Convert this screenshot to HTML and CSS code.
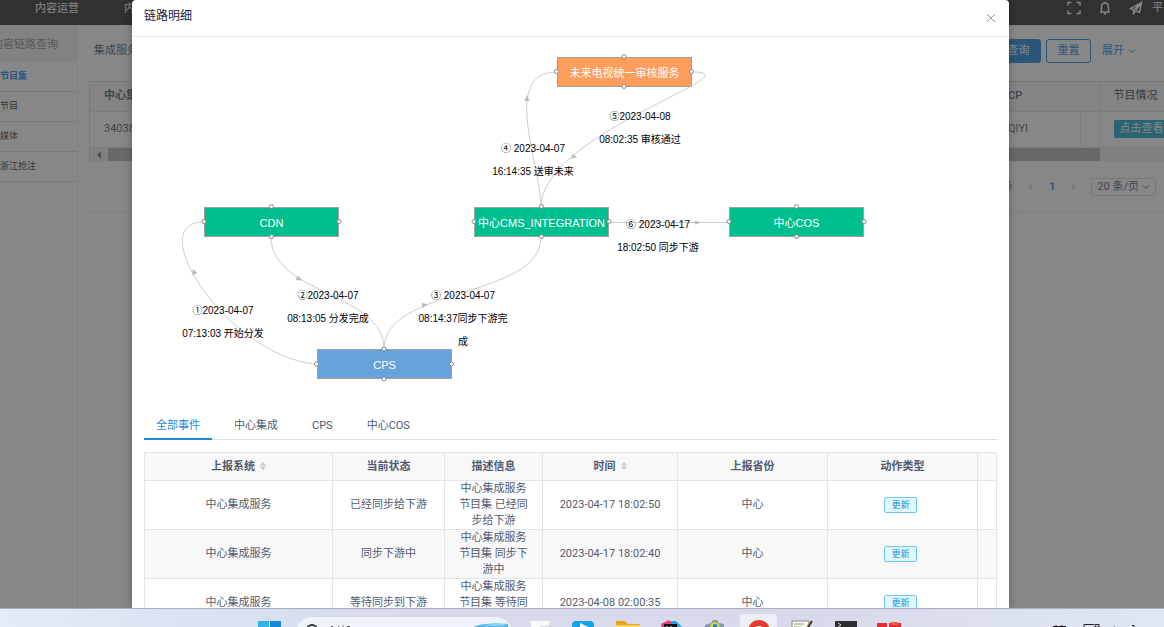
FILE: index.html
```html
<!DOCTYPE html>
<html lang="zh-CN">
<head>
<meta charset="utf-8">
<title>链路明细</title>
<link rel="stylesheet" href="styles.css">
</head>
<body>
<div class="screen">
  <div class="page">
    <header class="topbar">
      <nav class="topnav"><span>内容运营</span><span>内</span></nav>
      <div class="topicons">
        <svg width="14" height="14" viewBox="0 0 14 14"><path d="M1 4.500V1.500H4.500M9.500 1.500H13V4.500M13 9.500V12.500H9.500M4.500 12.500H1V9.500"/></svg>
        <svg width="12" height="14" viewBox="0 0 12 14"><path d="M1 11H11M2.500 11V6C2.500 3.500 4 2 6 2S9.500 3.500 9.500 6V11M6 2V.8M4.800 12.800H7.200"/></svg>
        <svg width="14" height="14" viewBox="0 0 14 14"><path d="M12.500 1.500L1.500 7.500L4.500 9L12.500 1.500L10.500 11.500L6.500 9.800M4.500 9V12.500L6.500 9.800L12.500 1.500"/></svg>
        <span>平</span>
      </div>
    </header>
    <div class="columns">
      <aside class="side">
        <div class="side-title">内容链路查询</div>
        <a class="side-item active" href="#">节目集</a>
        <a class="side-item" href="#">节目</a>
        <a class="side-item" href="#">媒体</a>
        <a class="side-item" href="#">浙江抢注</a>
      </aside>
      <main class="content">
        <div class="filters">
          <span class="filter-label">集成服务</span>
          <button class="btn solid">查询</button>
          <button class="btn">重置</button>
          <a class="expand" href="#">展开<svg width="8" height="6" viewBox="0 0 8 6"><path d="M1 1.500L4 4.500L7 1.500"/></svg></a>
        </div>
        <div class="list">
          <table class="list-table">
            <colgroup><col><col class="c-cp"><col class="c-gap"><col class="c-state"></colgroup>
            <tr><th>中心集</th><th>CP</th><th></th><th>节目情况</th></tr>
            <tr><td>34038</td><td>QIYI</td><td></td><td><button class="view">点击查看</button></td></tr>
          </table>
          <div class="scroll"><svg width="6" height="8" viewBox="0 0 6 8"><path d="M5 0V8L1 4Z"/></svg><div class="thumb"></div></div>
        </div>
        <div class="pager">
          <span>条</span>
          <svg class="step" width="6" height="8" viewBox="0 0 6 8"><path d="M4.500 1L1.500 4L4.500 7"/></svg>
          <b>1</b>
          <svg class="step" width="6" height="8" viewBox="0 0 6 8"><path d="M1.500 1L4.500 4L1.500 7"/></svg>
          <button class="size">20 条/页<svg width="8" height="6" viewBox="0 0 8 6"><path d="M1 1.500L4 4.500L7 1.500"/></svg></button>
        </div>
      </main>
    </div>
  </div>

  <div class="mask">
    <section class="modal" role="dialog" aria-label="链路明细">
      <div class="modal-head">
        <h1>链路明细</h1>
        <button class="close" aria-label="关闭"><svg width="10" height="10" viewBox="0 0 10 10"><path d="M1 1L9 9M9 1L1 9"/></svg></button>
      </div>

      <div class="graph">
        <div class="node n-audit">未来电视统一审核服务</div>
        <div class="node n-cdn">CDN</div>
        <div class="node n-cms">中心CMS_INTEGRATION</div>
        <div class="node n-cos">中心COS</div>
        <div class="node n-cps">CPS</div>
        <svg class="edges" width="877" height="374" viewBox="132 37 877 374">
          <g class="line">
            <path d="M317 364C230 358 140 222 204 222"/>
            <path d="M271 237C271 294 384 293 384 349"/>
            <path d="M384 349C384 286 541 299 541 237"/>
            <path d="M541 207C541 165 500 72 557 72"/>
            <path d="M692 72C760 72 541 133 541 207"/>
            <path d="M609 222.500H729"/>
          </g>
          <g class="arrow">
            <path d="M192.500 275L192.500 269L197.500 273Z"/>
            <path d="M295.500 280L298 275.500L302 280.500Z"/>
            <path d="M421.500 303L427.500 304L423 308Z"/>
            <path d="M524.500 101L527 95L529.500 101Z"/>
            <path d="M571 159L573 154L577 157Z"/>
            <path d="M695 220.500L701 222.500L695 224.500Z"/>
          </g>
          <g class="port">
            <circle cx="624" cy="56.500" r="2"/><circle cx="624" cy="86.500" r="2"/><circle cx="556.500" cy="71.500" r="2"/><circle cx="691.500" cy="71.500" r="2"/>
            <circle cx="271.500" cy="206.500" r="2"/><circle cx="271.500" cy="236.500" r="2"/><circle cx="204" cy="221.500" r="2"/><circle cx="339" cy="221.500" r="2"/>
            <circle cx="541.500" cy="206.500" r="2"/><circle cx="541.500" cy="236.500" r="2"/><circle cx="474" cy="221.500" r="2"/><circle cx="609" cy="221.500" r="2"/>
            <circle cx="796.500" cy="206.500" r="2"/><circle cx="796.500" cy="236.500" r="2"/><circle cx="729" cy="221.500" r="2"/><circle cx="864" cy="221.500" r="2"/>
            <circle cx="384" cy="349" r="2"/><circle cx="384" cy="379" r="2"/><circle cx="316.500" cy="364" r="2"/><circle cx="451.500" cy="364" r="2"/>
          </g>
        </svg>
        <div class="tag t1">①2023-04-07 07:13:03 开始分发</div>
        <div class="tag t2">②2023-04-07 08:13:05 分发完成</div>
        <div class="tag t3">③ 2023-04-07 08:14:37同步下游完成</div>
        <div class="tag t4">④ 2023-04-07 16:14:35 送审未来</div>
        <div class="tag t5">⑤2023-04-08 08:02:35 审核通过</div>
        <div class="tag t6">⑥ 2023-04-17 18:02:50 同步下游</div>
      </div>

      <div class="modal-body">
        <div class="tabs" role="tablist">
          <button class="tab active" role="tab">全部事件</button>
          <button class="tab" role="tab">中心集成</button>
          <button class="tab" role="tab">CPS</button>
          <button class="tab" role="tab">中心COS</button>
        </div>
        <table class="events">
          <colgroup><col class="w-sys"><col class="w-status"><col class="w-desc"><col class="w-time"><col class="w-type"><col class="w-type"><col></colgroup>
          <thead>
            <tr>
              <th>上报系统<svg class="sort" width="6" height="8" viewBox="0 0 6 8"><path d="M0 3.500L3 0L6 3.500ZM0 4.500L3 8L6 4.500Z"/></svg></th>
              <th>当前状态</th><th>描述信息</th>
              <th>时间<svg class="sort" width="6" height="8" viewBox="0 0 6 8"><path d="M0 3.500L3 0L6 3.500ZM0 4.500L3 8L6 4.500Z"/></svg></th>
              <th>上报省份</th><th>动作类型</th><th></th>
            </tr>
          </thead>
          <tbody>
            <tr><td>中心集成服务</td><td>已经同步给下游</td><td>中心集成服务节目集 已经同步给下游</td><td>2023-04-17 18:02:50</td><td>中心</td><td><span class="badge">更新</span></td><td></td></tr>
            <tr><td>中心集成服务</td><td>同步下游中</td><td>中心集成服务节目集 同步下游中</td><td>2023-04-17 18:02:40</td><td>中心</td><td><span class="badge">更新</span></td><td></td></tr>
            <tr><td>中心集成服务</td><td>等待同步到下游</td><td>中心集成服务节目集 等待同步到下游</td><td>2023-04-08 02:00:35</td><td>中心</td><td><span class="badge">更新</span></td><td></td></tr>
          </tbody>
        </table>
      </div>
    </section>
  </div>

  <footer class="taskbar">
    <button class="start" aria-label="开始"><svg width="24" height="24" viewBox="0 0 24 24"><path fill="#35b4ec" d="M0 1H11V12H0Z"/><path fill="#1689d8" d="M12 1H23V12H12Z"/><path fill="#0f7fd3" d="M0 13H11V23H0ZM12 13H23V23H12Z"/></svg></button>
    <div class="search">
      <svg width="50" height="24" viewBox="0 0 50 24"><circle cx="8" cy="13" r="5" fill="none" stroke="#333" stroke-width="2"/><path d="M27 9.500H29M34 9.500H35M39 8.500V10M43 9.500H46" stroke="#555"/></svg>
      <svg width="38" height="24" viewBox="0 0 38 24"><path fill="#4db4ea" d="M0 10C8 6 24 6 35 7L36 20H0Z"/><path fill="#8cd4f5" d="M8 9Q20 6 34 7L30 9Z"/></svg>
    </div>
    <div class="apps">
      <span><svg width="24" height="24" viewBox="0 0 24 24"><path fill="#f9fbfb" d="M2 1H20V20H2Z"/><path fill="#e4e9e8" d="M11 5H20V20H11Z"/></svg></span>
      <span><svg width="24" height="24" viewBox="0 0 24 24"><rect x="0" y="1" width="22" height="22" rx="4" fill="#13a4ed"/><path d="M8 3V12L16 7Z" fill="#fff"/></svg></span>
      <span><svg width="24" height="24" viewBox="0 0 24 24"><path fill="#e4a51d" d="M0 1H9L12 4H24V20H0Z"/><path fill="#ffd366" d="M0 5H24V20H0Z"/></svg></span>
      <span><svg width="24" height="24" viewBox="0 0 24 24"><path fill="#ef3c76" d="M2 4L10 0L15 6L5 20Z"/><path fill="#16a6e5" d="M12 1H17L23 7V20H12Z"/><path fill="#161219" d="M5 4H18V20H5Z"/><path stroke="#fff" d="M8 6V10M12 6V10"/></svg></span>
      <span><svg width="24" height="24" viewBox="0 0 24 24"><path fill="#8297b4" d="M10 0H14L16 3L21 4V20H2V5L8 3Z"/><circle cx="12" cy="7" r="5" fill="#c8d648"/><circle cx="12" cy="6" r="2" fill="#2e75bf"/></svg></span>
      <span class="on"><svg width="24" height="24" viewBox="0 0 24 24"><circle cx="12" cy="11" r="11" fill="#e33b30"/><circle cx="12" cy="12" r="6" fill="#fff"/><path fill="#f6c027" d="M20 8L23 12L15 22Z"/></svg></span>
      <span><svg width="24" height="24" viewBox="0 0 24 24"><path fill="#fafafa" stroke="#888" d="M2 1H19V20H2Z"/><path stroke="#899c68" d="M4 4H14M4 7H12"/><path stroke="#343434" stroke-width="2" d="M22 1L15 12"/><path stroke="#d6a536" d="M20 1L14 12"/></svg></span>
      <span><svg width="24" height="24" viewBox="0 0 24 24"><path fill="#2b2d31" d="M1 1H23V20H1Z"/><path fill="none" stroke="#ddd" d="M4 3L7 5L4 7"/></svg></span>
      <span><svg width="24" height="24" viewBox="0 0 24 24"><path fill="#e82a32" d="M0 3H10V20H0ZM12 3H24V20H12Z"/><path fill="#f05b46" d="M14 2H21V5H14Z"/></svg></span>
    </div>
    <div class="tray"><svg width="90" height="12" viewBox="0 0 90 12"><path d="M1 9.500H14M4 8V11M10 8V11M32 12V7.500H42M43 7.500H47V10H43ZM62 10H63M80 8.500H82V12" fill="none" stroke="#222"/></svg></div>
  </footer>
</div>
</body>
</html>
```
FILE: styles.css
```css
* { box-sizing: border-box; }
body {
  margin: 0;
  overflow: hidden;
  font: 11px/16px Roboto, "Noto Sans CJK SC", sans-serif;
  color: #515a6e;
}
a { color: inherit; text-decoration: none; }
button { font: inherit; color: inherit; background: none; border: 0; padding: 0; }
svg { flex: none; }

.screen { display: grid; grid-template: minmax(0, 1fr) 19px / minmax(0, 1fr); height: 100vh; }
.page, .mask { grid-area: 1 / 1; min-height: 0; overflow: hidden; }
.page { background: #fff; }

/* page underneath */
.topbar { display: flex; justify-content: space-between; height: 25px; padding-top: 1px; background: #2a2a2a; color: #fff; overflow: hidden; }
.topnav { display: flex; gap: 45px; padding-left: 35px; }
.topicons { display: flex; gap: 18px; height: 14px; align-items: center; width: 97px; white-space: nowrap; }
.topicons span { margin-left: -9px; }
.topicons svg { fill: none; stroke: #fff; stroke-width: 1.400; }
.columns { display: flex; }
.side { width: 78px; flex: none; border-right: 1px solid #eee; height: 600px; }
.side-title { height: 37px; padding: 12px 0 9px; background: #f2f2f2; color: #888; text-indent: -8px; white-space: nowrap; }
.side-item { display: block; height: 30px; padding: 6px 0; border-bottom: 1px solid #e2e2e2; font-size: 9px; color: #333; }
.side-item.active { color: #1488e0; font-weight: 700; }
.content { flex: 1; min-width: 0; padding: 14px 0 0 11px; }
.filters { display: flex; align-items: center; gap: 5px; padding: 0 28px 0 5px; }
.filter-label { margin-right: auto; }
.btn { width: 45px; height: 24px; border: 1px solid #1484dc; border-radius: 3px; color: #1484dc; }
.btn.solid { background: #1484dc; color: #fff; }
.expand { display: flex; align-items: center; gap: 4px; margin-left: 6px; color: #1484dc; }
.expand svg, .pager svg { fill: none; stroke: currentColor; }
.list { margin-top: 18px; border: 1px solid #ddd; border-right: 0; border-bottom: 0; }
.list-table { width: 100%; table-layout: fixed; border-collapse: collapse; }
.list-table th, .list-table td { height: 29px; padding: 0 14px; text-align: left; border-bottom: 1px solid #e6e6e6; white-space: nowrap; }
.list-table td { height: 36px; }
.list-table th { background: #f8f8f9; }
.list-table th:nth-child(n+2) { font-weight: 500; }
.list-table td:nth-child(2), .list-table td:nth-child(3), .list-table th:nth-child(3) { border-right: 1px solid #e6e6e6; }
.list-table td:nth-child(3), .list-table th:nth-child(3) { padding: 0; }
.c-cp { width: 86px; }
.c-gap { width: 19px; }
.c-state { width: 65px; }
.view { height: 18px; padding: 0 6px; background: #14a8cc; color: #fff; border-radius: 2px; }
.scroll { display: flex; align-items: center; gap: 6px; height: 14px; padding: 0 64px 0 6px; background: #f1f1f1; }
.scroll svg { fill: #777; }
.thumb { flex: 1; height: 13px; background: #b4b4b4; }
.pager { display: flex; justify-content: flex-end; align-items: center; gap: 15px; padding: 16px 8px 16px 0; border-bottom: 1px solid #eee; }
.pager .step { color: #aaa; }
.pager b { color: #1484dc; }
.size { display: flex; align-items: center; gap: 3px; height: 18px; padding: 0 5px; border: 1px solid #ddd; border-radius: 2px; }

/* dialog */
.mask { display: flex; padding: 0 155px 0 132px; background: rgba(55, 55, 55, .6); z-index: 1; }
.modal { flex: 1; min-width: 0; background: #fff; border-radius: 4px 4px 0 0; overflow: hidden; box-shadow: 0 0 8px rgba(0, 0, 0, .3); }
.modal-head { display: flex; justify-content: space-between; align-items: center; height: 37px; padding: 0 13px 4px 12px; border-bottom: 1px solid #e8eaec; }
.modal-head h1 { margin: 0; font-size: 12px; font-weight: 400; color: #17233d; }
.close { display: flex; padding-top: 3px; }
.close svg { fill: none; stroke: #999; }

.graph { position: relative; height: 374px; font-family: "Liberation Sans", "Noto Sans CJK SC", sans-serif; }
.node { position: absolute; width: 135px; height: 30px; border: 1px solid #a0a0a0; background: #00bf8f; color: #fff; line-height: 30px; text-align: center; white-space: nowrap; }
.n-audit { left: 425px; top: 20px; background: #ff9d5c; }
.n-cdn { left: 72px; top: 170px; }
.n-cms { left: 342px; top: 170px; }
.n-cos { left: 597px; top: 170px; }
.n-cps { left: 185px; top: 312px; background: #68a2da; }
.edges { position: absolute; left: 0; top: 0; }
.line { fill: none; stroke: #ccc; }
.arrow { fill: #bbb; }
.port { fill: #fff; stroke: #888; }
.tag { position: absolute; width: 90px; font-size: 10px; line-height: 23px; text-align: center; color: #000; }
.t1 { left: 46px; top: 262px; }
.t2 { left: 151px; top: 247px; }
.t3 { left: 286px; top: 247px; }
.t4 { left: 356px; top: 100px; }
.t5 { left: 463px; top: 68px; }
.t6 { left: 481px; top: 176px; }

.modal-body { padding: 0 12px; }
.tabs { display: flex; gap: 10px; height: 29px; border-bottom: 1px solid #dcdee2; margin-bottom: 12px; }
.tab { height: 29px; padding: 3px 12px 0; border-bottom: 2px solid transparent; }
.tab.active { color: #1c8ad8; border-color: #1c8ad8; }
.events { width: 100%; table-layout: fixed; border-collapse: collapse; text-align: center; }
.events th, .events td { border: 1px solid #e2e4e8; padding: 0 12px; }
.events th { height: 28px; background: #f8f8f9; font-weight: 700; }
.events td { height: 48px; }
.events tbody tr:nth-child(2) { background: #f8f8f9; }
.events td:nth-child(4), .events td:nth-child(2) { padding: 0 4px; }
.events th:last-child, .events td:last-child { padding: 0; }
.w-sys { width: 188px; }
.w-status { width: 112px; }
.w-desc { width: 98px; }
.w-time { width: 135px; }
.w-type { width: 150px; }
.sort { margin-left: 5px; fill: #c5c8ce; }
.badge { display: inline-block; height: 16px; padding: 0 6px; margin-right: 4px; border: 1px solid #6cc8ea; border-radius: 2px; background: #e0f7ff; color: #0d8ee0; font-size: 9px; line-height: 14px; }

/* desktop taskbar */
.taskbar { display: flex; overflow: hidden; padding: 0 22px 0 258px; border-top: 1px solid #a9afc2; background: linear-gradient(90deg, #e3ebf6, #d8e0f2 22%, #dadaee 35%, #d8d9ea 70%, #dfe7f3); }
.start { display: flex; align-items: flex-start; padding-top: 11px; }
.search { display: flex; justify-content: space-between; width: 218px; height: 36px; margin: 8px 6px 0 13px; padding: 0 2px 0 9px; border-radius: 18px; background: #f0f3fb; }
.apps { display: grid; grid-template-columns: repeat(9, 1fr); width: 392px; flex: none; }
.apps span { display: flex; justify-content: center; height: 44px; padding-top: 11px; margin: 0 3px; }
.apps .on { background: #eceef8; border-radius: 4px 4px 0 0; margin-top: 5px; padding-top: 6px; }
.tray { margin-left: auto; padding-top: 8px; }
```
